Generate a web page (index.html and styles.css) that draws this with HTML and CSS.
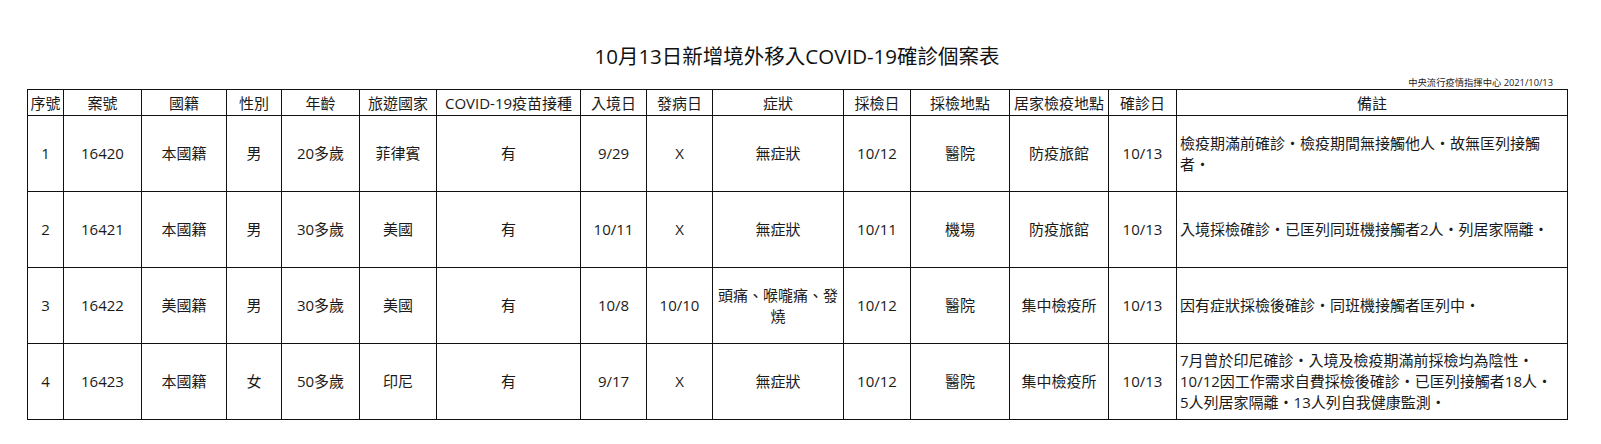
FILE: index.html
```html
<!DOCTYPE html>
<html lang="zh-TW">
<head>
<meta charset="utf-8">
<title>10月13日新增境外移入COVID-19確診個案表</title>
<link rel="stylesheet" href="styles.css">
</head>
<body>
<div class="page">
  <h1 class="title">10月13日新增境外移入COVID-19確診個案表</h1>
  <div class="source">中央流行疫情指揮中心 2021/10/13</div>
  <table class="cases">
    <colgroup>
      <col class="c-no"><col class="c-id"><col class="c-nat"><col class="c-sex"><col class="c-age"><col class="c-travel"><col class="c-vac"><col class="c-entry"><col class="c-onset"><col class="c-sym"><col class="c-test"><col class="c-place"><col class="c-quar"><col class="c-conf"><col class="c-note">
    </colgroup>
    <thead>
      <tr class="head">
        <th>序號</th><th>案號</th><th>國籍</th><th>性別</th><th>年齡</th><th>旅遊國家</th><th>COVID-19疫苗接種</th><th>入境日</th><th>發病日</th><th>症狀</th><th>採檢日</th><th>採檢地點</th><th>居家檢疫地點</th><th>確診日</th><th>備註</th>
      </tr>
    </thead>
    <tbody>
      <tr class="row">
        <td>1</td><td>16420</td><td>本國籍</td><td>男</td><td>20多歲</td><td>菲律賓</td><td>有</td><td>9/29</td><td>X</td><td>無症狀</td><td>10/12</td><td>醫院</td><td>防疫旅館</td><td>10/13</td>
        <td class="note">檢疫期滿前確診・檢疫期間無接觸他人・故無匡列接觸<br>者・</td>
      </tr>
      <tr class="row">
        <td>2</td><td>16421</td><td>本國籍</td><td>男</td><td>30多歲</td><td>美國</td><td>有</td><td>10/11</td><td>X</td><td>無症狀</td><td>10/11</td><td>機場</td><td>防疫旅館</td><td>10/13</td>
        <td class="note">入境採檢確診・已匡列同班機接觸者2人・列居家隔離・</td>
      </tr>
      <tr class="row">
        <td>3</td><td>16422</td><td>美國籍</td><td>男</td><td>30多歲</td><td>美國</td><td>有</td><td>10/8</td><td>10/10</td><td>頭痛、喉嚨痛、發<br>燒</td><td>10/12</td><td>醫院</td><td>集中檢疫所</td><td>10/13</td>
        <td class="note">因有症狀採檢後確診・同班機接觸者匡列中・</td>
      </tr>
      <tr class="row">
        <td>4</td><td>16423</td><td>本國籍</td><td>女</td><td>50多歲</td><td>印尼</td><td>有</td><td>9/17</td><td>X</td><td>無症狀</td><td>10/12</td><td>醫院</td><td>集中檢疫所</td><td>10/13</td>
        <td class="note">7月曾於印尼確診・入境及檢疫期滿前採檢均為陰性・<br>10/12因工作需求自費採檢後確診・已匡列接觸者18人・<br>5人列居家隔離・13人列自我健康監測・</td>
      </tr>
    </tbody>
  </table>
</div>
</body>
</html>
```

FILE: styles.css
```css
html, body {
  margin: 0;
  padding: 0;
  background: #ffffff;
}

body {
  font-family: "Open Sans", "Noto Sans CJK TC", "Noto Sans", sans-serif;
  color: #1a1a1a;
}

.page {
  width: 1540px;
  padding: 43px 0 0 27px;
}

.title {
  margin: 0;
  font-size: 20.5px;
  line-height: 27px;
  font-weight: normal;
  text-align: center;
  color: #111;
}

.source {
  margin-top: 7px;
  padding-right: 14px;
  font-size: 9.3px;
  line-height: 12px;
  text-align: right;
  color: #222;
}

.cases {
  width: 1540px;
  table-layout: fixed;
  border-collapse: collapse;
  font-size: 15px;
  line-height: 21px;
}

.cases th,
.cases td {
  border: 1px solid #111;
  padding: 0 2px;
  text-align: center;
  vertical-align: middle;
  font-weight: normal;
  overflow: hidden;
  white-space: nowrap;
}

.cases td.note {
  text-align: left;
  padding-left: 3px;
}

.head {
  height: 26px;
}

.head th {
  line-height: 20px;
}

.row {
  height: 76px;
}

.c-no { width: 36px; }
.c-id { width: 78px; }
.c-nat { width: 85px; }
.c-sex { width: 55px; }
.c-age { width: 78px; }
.c-travel { width: 77px; }
.c-vac { width: 144px; }
.c-entry { width: 66px; }
.c-onset { width: 66px; }
.c-sym { width: 131px; }
.c-test { width: 67px; }
.c-place { width: 99px; }
.c-quar { width: 99px; }
.c-conf { width: 68px; }
.c-note { width: 391px; }
```
